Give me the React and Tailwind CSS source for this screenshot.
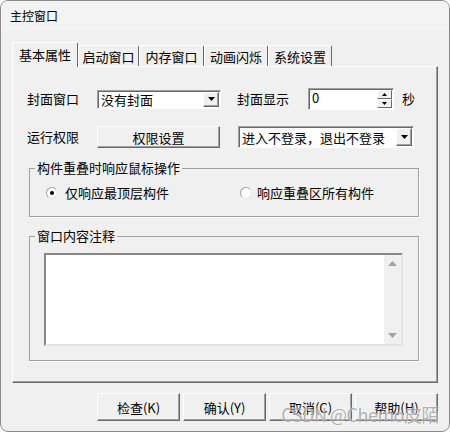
import React from 'react';

const font = { fontFamily: '"Noto Sans CJK SC", "Liberation Sans", sans-serif' };

const Tab = ({ label, width, active }) => (
  <div
    className={`flex items-center justify-center bg-[#f0f0f0] border-l border-t border-l-white border-t-white border-r border-r-[#696969] rounded-t-[2px] text-[13px] leading-none text-black ${
      active ? 'relative z-10 h-[25px] -mb-px pb-[2px]' : 'h-[21px]'
    }`}
    style={{ width }}
  >
    {label}
  </div>
);

const DropButton = () => (
  <div className="flex h-full w-[16px] items-center justify-center bg-[#f0f0f0] border border-t-white border-l-white border-b-[#696969] border-r-[#696969] shadow-[inset_-1px_-1px_0_#a0a0a0]">
    <svg width="7" height="4" viewBox="0 0 7 4">
      <path d="M0 0h7L3.5 4z" fill="#000" />
    </svg>
  </div>
);

const Combo = ({ value, width, height }) => (
  <div
    className="flex items-stretch bg-white border border-t-[#a0a0a0] border-l-[#a0a0a0] border-b-white border-r-white shadow-[inset_1px_1px_0_#696969]"
    style={{ width, height }}
  >
    <div className="flex flex-1 items-center pl-[3px] pt-[1px] text-[13px] leading-none text-black">{value}</div>
    <div className="py-[1px] pr-[1px]">
      <DropButton />
    </div>
  </div>
);

const RaisedButton = ({ children, className = '' }) => (
  <button
    className={`flex items-center justify-center bg-[#f0f0f0] border border-t-white border-l-white border-b-[#696969] border-r-[#696969] shadow-[inset_-1px_-1px_0_#a0a0a0] text-[13px] leading-none text-black ${className}`}
  >
    {children}
  </button>
);

const Radio = ({ checked }) => (
  <span className="flex h-[12px] w-[12px] items-center justify-center rounded-full bg-white border border-t-[#a0a0a0] border-l-[#a0a0a0] border-b-[#e3e3e3] border-r-[#e3e3e3]">
    {checked && <span className="h-[4px] w-[4px] rounded-full bg-black" />}
  </span>
);

const Spin = () => (
  <div className="flex h-[22px] w-[86px] items-stretch bg-white border border-t-[#a0a0a0] border-l-[#a0a0a0] border-b-white border-r-white shadow-[inset_1px_1px_0_#696969]">
    <div className="flex-1 pl-[3px] pt-[2px] text-[13px] leading-none text-black">0</div>
    <div className="flex w-[16px] flex-col py-[1px] pr-[1px]">
      {['M0 3h5L2.5 0z', 'M0 0h5L2.5 3z'].map((d) => (
        <div
          key={d}
          className="flex flex-1 items-center justify-center bg-[#f0f0f0] border border-t-white border-l-white border-b-[#696969] border-r-[#696969]"
        >
          <svg width="5" height="3" viewBox="0 0 5 3">
            <path d={d} fill="#000" />
          </svg>
        </div>
      ))}
    </div>
  </div>
);

const Group = ({ title, children, className = '' }) => (
  <fieldset className={`ml-[2px] w-[390px] border border-[#a0a0a0] shadow-[1px_1px_0_white] ${className}`}>
    <legend className="ml-[5px] px-[2px] text-[13px] leading-[16px] text-black">{title}</legend>
    {children}
  </fieldset>
);

export default function App() {
  return (
    <div className="h-[432px] w-[450px] bg-white" style={font}>
      <div className="relative flex h-[432px] w-[450px] flex-col overflow-hidden rounded-[8px] border border-[#8c8c8c] bg-[#f0f0f0]">
        <div className="flex h-[30px] items-center bg-[#f3f3f3] pl-[9px] text-[12px] text-black">主控窗口</div>

        <div className="px-[11px] pt-[11px]">
          <div className="flex h-[24px] items-end">
            <Tab label="基本属性" width={66} active />
            <Tab label="启动窗口" width={61} />
            <Tab label="内存窗口" width={65} />
            <Tab label="动画闪烁" width={64} />
            <Tab label="系统设置" width={64} />
          </div>

          <div className="h-[317px] w-[426px] border border-t-white border-l-white border-b-[#696969] border-r-[#696969] shadow-[inset_-1px_-1px_0_#a0a0a0] pl-[14px] pt-[21px]">
            <div className="flex h-[22px] items-center text-[13px] text-black">
              <span className="w-[70px]">封面窗口</span>
              <Combo value="没有封面" width={124} height={19} />
              <span className="ml-[16px] w-[71px]">封面显示</span>
              <Spin />
              <span className="ml-[8px]">秒</span>
            </div>

            <div className="mt-[16px] flex h-[22px] items-center text-[13px] text-black">
              <span className="w-[70px]">运行权限</span>
              <RaisedButton className="h-[22px] w-[123px]">权限设置</RaisedButton>
              <div className="ml-[18px]">
                <Combo value="进入不登录，退出不登录" width={176} height={22} />
              </div>
            </div>

            <Group title="构件重叠时响应鼠标操作" className="mt-[12px] pb-[15px]">
              <div className="flex h-[16px] items-center pl-[16px] pt-0 mt-[9px] text-[13px] text-black">
                <div className="flex w-[194px] items-center gap-[7px]">
                  <Radio checked />
                  <span>仅响应最顶层构件</span>
                </div>
                <div className="flex items-center gap-[5px]">
                  <Radio />
                  <span>响应重叠区所有构件</span>
                </div>
              </div>
            </Group>

            <Group title="窗口内容注释" className="mt-[11px] pb-[14px]">
              <div className="ml-[14px] mt-[9px] flex h-[93px] w-[359px] bg-white border-2 border-t-[#868686] border-l-[#868686] border-b-[#e3e3e3] border-r-[#e3e3e3]">
                <div className="flex-1" />
                <div className="flex w-[17px] flex-col items-center justify-between bg-[#f0f0f0] py-[6px]">
                  <svg width="9" height="5" viewBox="0 0 9 5">
                    <path d="M0 5h9L4.5 0z" fill="#a3a3a3" />
                  </svg>
                  <svg width="9" height="5" viewBox="0 0 9 5">
                    <path d="M0 0h9L4.5 5z" fill="#a3a3a3" />
                  </svg>
                </div>
              </div>
            </Group>
          </div>

          <div className="mt-[10px] flex justify-end gap-[3px]">
            <RaisedButton className="h-[28px] w-[83px]">检查(K)</RaisedButton>
            <RaisedButton className="h-[28px] w-[83px]">确认(Y)</RaisedButton>
            <RaisedButton className="h-[28px] w-[83px]">取消(C)</RaisedButton>
            <RaisedButton className="h-[28px] w-[83px]">帮助(H)</RaisedButton>
          </div>
        </div>

        <div className="pointer-events-none absolute bottom-[8px] right-[10px] text-[18px] leading-none tracking-[-0.5px] text-[#8f8f8f]/70 [text-shadow:0_0_2px_white]">
          CSDN @Chemo皮陌
        </div>
      </div>
    </div>
  );
}
